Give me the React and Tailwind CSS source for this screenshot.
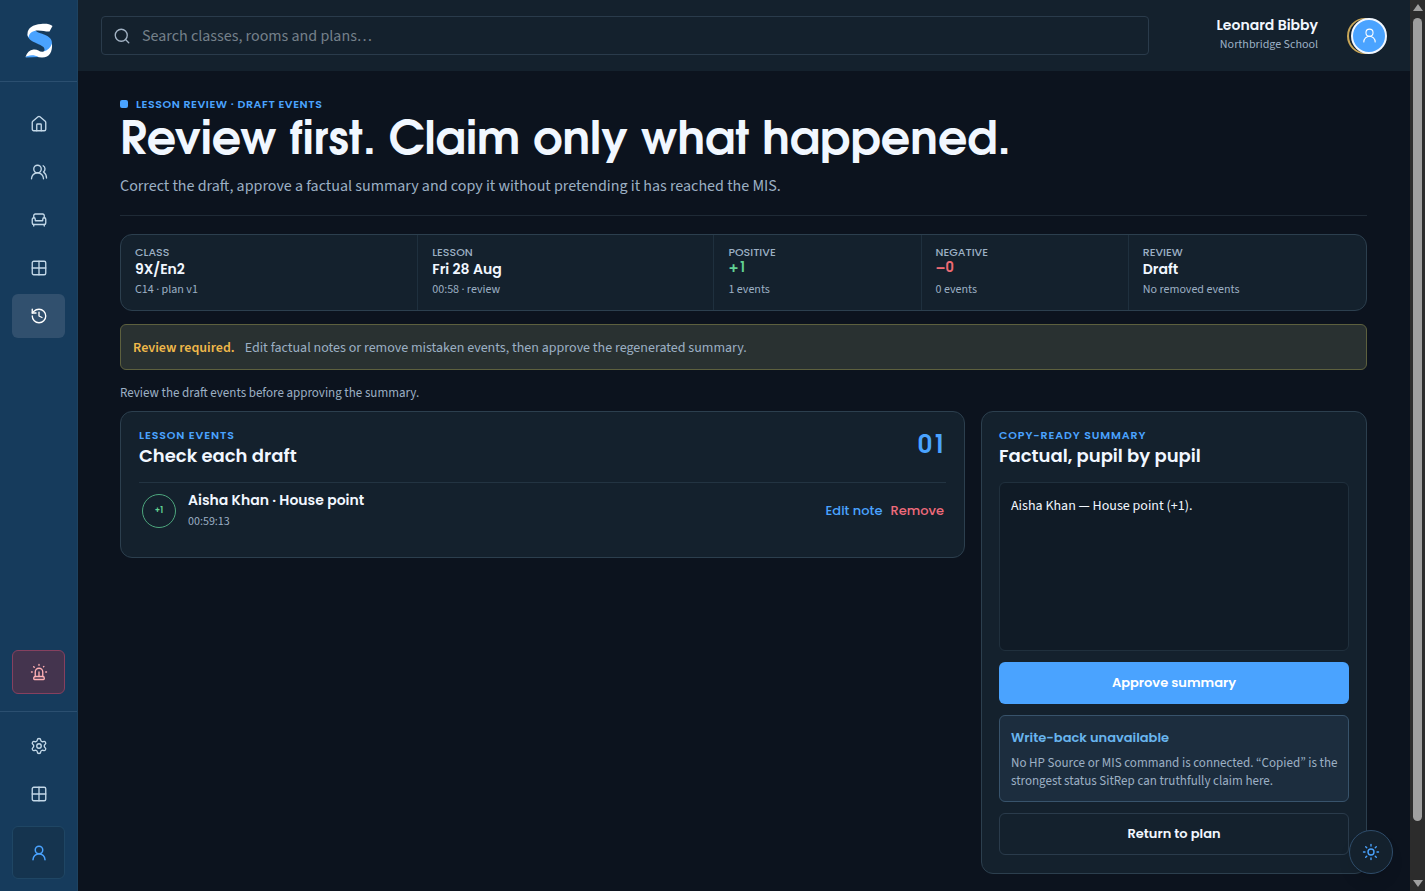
import {
  Grid2x2,
  History,
  House,
  Search,
  Settings,
  Siren,
  Sun,
  UserRound,
  UsersRound,
} from 'lucide-react'

const display = "font-['Poppins','Inter',sans-serif]"
const headline = "font-['ITC_Avant_Garde_Gothic','URW_Gothic','TeX_Gyre_Adventor','Poppins','Inter',sans-serif]"

const stats = [
  { label: 'Class', value: '9X/En2', note: 'C14 · plan v1' },
  { label: 'Lesson', value: 'Fri 28 Aug', note: '00:58 · review' },
  { label: 'Positive', value: '+1', note: '1 events', tone: 'text-[#62d394]' },
  { label: 'Negative', value: '−0', note: '0 events', tone: 'text-[#ef6b73]' },
  { label: 'Review', value: 'Draft', note: 'No removed events' },
]

const nav = [
  { label: 'Home', icon: House },
  { label: 'Classes', icon: UsersRound },
  { label: 'Rooms', icon: SofaIcon },
  { label: 'Plans', icon: Grid2x2 },
  { label: 'History', icon: History, active: true },
]

function SofaIcon({ size, strokeWidth }) {
  return (
    <svg
      width={size}
      height={size}
      viewBox="0 0 24 24"
      fill="none"
      stroke="currentColor"
      strokeWidth={strokeWidth}
      strokeLinecap="round"
      strokeLinejoin="round"
      aria-hidden="true"
    >
      <path d="M19 9V6a2 2 0 0 0-2-2H7a2 2 0 0 0-2 2v3" />
      <path d="M3 16a2 2 0 0 0 2 2h14a2 2 0 0 0 2-2v-5a2 2 0 0 0-4 0v1.500a.5.5 0 0 1-.5.5h-9a.5.5 0 0 1-.5-.5V11a2 2 0 0 0-4 0z" />
      <path d="M5 18v2M19 18v2" />
    </svg>
  )
}

function Logo() {
  return (
    <svg viewBox="0 0 28 36" className="h-9 w-7" aria-hidden="true">
      <path d="M2.500 11c0 5 4 7 9.500 9.500 4 2 7.500 3 7.500 6 0 1.500-1 3-2 4C23 30 27 26 27 20.500c0-5-3-7-8-9-5-2-8.500-2.500-9.500-5.500z" fill="#4aa3ff" />
      <path d="M27.500 3C25 1 21 .6 16 1 8 1.500 2.500 5 2.500 11c0 1.500.3 2.500 1 3.500C4 10 8 7.500 13 7.500c5 0 9 1.500 11.500 1z" fill="#fff" />
      <path d="M27 20.500c.5 8-2 14-10 14-6 0-8-3-16.500-.5 1.500-4.500 4-7 8-7.500 4.500-.5 6 3 10 2 4-1 7-3.500 8.500-8z" fill="#fff" />
      <path d="M.5 34.500c1-2 8-3.500 13-.5z" fill="#4aa3ff" />
    </svg>
  )
}

function NavButton({ label, icon: Icon, active }) {
  return (
    <button
      type="button"
      aria-label={label}
      className={`flex h-11 w-full items-center justify-center rounded-md ${
        active ? 'bg-[#31506e] text-white' : 'text-[#c3d8e8]'
      }`}
    >
      <Icon size={18} strokeWidth={1.8} />
    </button>
  )
}

function Sidebar() {
  return (
    <aside className="flex w-[78px] shrink-0 flex-col border-r border-[#1d4260] bg-[#163b5c]">
      <a href="#home" aria-label="SitRep" className="flex h-[82px] items-center justify-center border-b border-[#2b4f70]">
        <Logo />
      </a>
      <nav className="flex grow flex-col gap-1 px-3 pt-5">
        {nav.map((item) => (
          <NavButton key={item.label} {...item} />
        ))}
      </nav>
      <div className="px-3 pb-[17px]">
        <button
          type="button"
          aria-label="Alert"
          className="flex h-11 w-full items-center justify-center rounded-md border border-[#86405f] bg-[#44344e] text-[#ffb0b4]"
        >
          <Siren size={18} strokeWidth={1.8} />
        </button>
      </div>
      <div className="flex flex-col gap-1 border-t border-[#2b4f70] px-3 pt-3 pb-3">
        <NavButton label="Settings" icon={Settings} />
        <NavButton label="Layouts" icon={Grid2x2} />
        <button
          type="button"
          aria-label="Account"
          className="mt-1.5 flex h-[53px] w-full items-center justify-center rounded-md border border-[#1f4664] bg-[#15344f] text-[#4aa3ff]"
        >
          <UserRound size={18} strokeWidth={2} />
        </button>
      </div>
    </aside>
  )
}

function Header() {
  return (
    <header className="flex h-[71px] shrink-0 items-center bg-[#14212d] px-[23px]">
      <label className="flex h-[39px] grow items-center gap-[11px] rounded border border-[#2a3b4b] px-[11px]">
        <Search size={18} strokeWidth={1.8} className="shrink-0 text-[#a3b3c4]" />
        <input
          type="search"
          aria-label="Search"
          placeholder="Search classes, rooms and plans…"
          className="w-full bg-transparent text-[16px] text-white outline-none placeholder:text-[#75808a]"
        />
      </label>
      <div className="mb-[3px] w-[169px] shrink-0 text-right">
        <p className={`${display} text-[14px] leading-5 font-semibold text-[#f1f7ff]`}>Leonard Bibby</p>
        <p className="mt-[2px] text-[12px] leading-4 text-[#9cb0c4]">Northbridge School</p>
      </div>
      <button
        type="button"
        aria-label="Profile"
        className="ml-[33px] flex size-9 shrink-0 items-center justify-center rounded-full border-2 border-[#f1f7ff] bg-[#4aa3ff] text-white shadow-[-3px_0_0_-1px_#14212d,-4px_0_0_0_#c9a758]"
      >
        <UserRound size={17} strokeWidth={1.5} />
      </button>
    </header>
  )
}

function Stats() {
  return (
    <dl className="grid grid-cols-[1.430fr_1.430fr_1fr_1fr_1.150fr] rounded-xl border border-[#2c3f4e] bg-[#14212d]">
      {stats.map((s) => (
        <div key={s.label} className="h-[75px] border-l border-[#1f303e] px-[14px] pt-[9px] first:border-l-0">
          <dt className={`${display} text-[11px] leading-4 font-medium text-[#9cb0c4] uppercase`}>{s.label}</dt>
          {s.tone ? (
            <dd className={`${headline} text-[14px] leading-[18px] font-semibold ${s.tone}`}>{s.value}</dd>
          ) : (
            <dd className={`${display} text-[14px] leading-[18px] font-semibold text-[#f1f7ff]`}>{s.value}</dd>
          )}
          <dd className="mt-1 text-[12px] leading-4 text-[#9cb0c4]">{s.note}</dd>
        </div>
      ))}
    </dl>
  )
}

function CardHeading({ eyebrow, title }) {
  return (
    <div>
      <p className={`${display} text-[11px] leading-4 font-semibold tracking-[0.08em] text-[#4aa3ff] uppercase`}>{eyebrow}</p>
      <h2 className={`${display} text-[18px] leading-[26px] font-semibold text-[#f1f7ff]`}>{title}</h2>
    </div>
  )
}

function Events() {
  return (
    <section className="h-[147px] rounded-xl border border-[#2c3f4e] bg-[#14212d] px-[18px] pt-[15px]">
      <div className="flex h-14 justify-between border-b border-[#233442]">
        <CardHeading eyebrow="Lesson events" title="Check each draft" />
        <span className={`${headline} pt-1 text-[25px] leading-8 font-semibold text-[#4aa3ff]`}>01</span>
      </div>
      <div className="flex items-center pt-[7px] pr-[2px] pl-[3px]">
        <span className={`${display} flex size-[34px] items-center justify-center rounded-full border border-[#4da67d] text-[8px] font-semibold text-[#62d394]`}>
          +1
        </span>
        <div className="mb-[2px] ml-3 grow">
          <h3 className={`${display} text-[14px] leading-5 font-semibold text-[#f1f7ff]`}>Aisha Khan · House point</h3>
          <p className="mt-1 text-[12px] leading-4 text-[#9cb0c4]">00:59:13</p>
        </div>
        <div className={`${display} flex gap-2 text-[13px] leading-5 font-medium`}>
          <button type="button" className="text-[#4aa3ff]">Edit note</button>
          <button type="button" className="text-[#ef6b7b]">Remove</button>
        </div>
      </div>
    </section>
  )
}

function Summary() {
  return (
    <section className="rounded-xl border border-[#2c3f4e] bg-[#14212d] px-[17px] pt-[15px] pb-[18px]">
      <CardHeading eyebrow="Copy-ready summary" title="Factual, pupil by pupil" />
      <textarea
        aria-label="Summary"
        readOnly
        defaultValue="Aisha Khan — House point (+1)."
        className="mt-[13px] block h-[169px] w-full resize-none rounded-md border border-[#20303d] bg-[#101b26] px-[11px] py-[13px] text-[14px] leading-5 text-[#f1f7ff] outline-none"
      />
      <button type="button" className={`${display} mt-[11px] h-[42px] w-full rounded-md bg-[#4aa3ff] text-[13px] font-semibold text-white`}>
        Approve summary
      </button>
      <div className="mt-[11px] rounded-md border border-[#38536b] bg-[#1c2d3e] pt-3 pr-2 pb-[11px] pl-[11px]">
        <h3 className={`${display} text-[13px] leading-5 font-semibold text-[#69b5ee]`}>Write-back unavailable</h3>
        <p className="mt-[6px] text-[13px] leading-[18px] text-[#9cb0c4]">
          No HP Source or MIS command is connected. “Copied” is the strongest status SitRep can truthfully claim here.
        </p>
      </div>
      <button type="button" className={`${display} mt-[11px] h-[42px] w-full rounded-md border border-[#2a3b4b] text-[13px] font-semibold text-[#f1f7ff]`}>
        Return to plan
      </button>
    </section>
  )
}

function ScrollTrack() {
  return (
    <div aria-hidden="true" className="flex w-[15px] shrink-0 flex-col items-center bg-[#2c2c2c] py-1">
      <span className="border-x-[5px] border-b-[7px] border-x-transparent border-b-[#9f9f9f]" />
      <span className="mt-[7px] h-[803px] w-[9px] rounded-full bg-[#9f9f9f]" />
      <span className="mt-auto border-x-[5px] border-t-[7px] border-x-transparent border-t-[#9f9f9f]" />
    </div>
  )
}

export default function App() {
  return (
    <div className="flex h-screen overflow-hidden bg-[#0c131e] font-['Source_Sans_3','Source_Sans_Pro','Noto_Sans_CJK_KR',sans-serif]">
      <Sidebar />
      <div className="flex min-w-0 grow flex-col">
        <Header />
        <main className="pt-[25px] pr-[43px] pl-[42px]">
          <p className={`${display} flex items-center gap-2 text-[11px] leading-4 font-semibold tracking-wider text-[#4aa3ff] uppercase`}>
            <span className="size-2 rounded-xs bg-[#4aa3ff]" />
            Lesson review · Draft events
          </p>
          <h1 className={`${headline} pt-[5px] text-[46px] leading-[50px] font-bold text-[#f1f7ff]`}>
            Review first. Claim only what happened.
          </h1>
          <p className="mt-[7px] border-b border-[#1f2a36] pb-[17px] text-[16px] leading-6 text-[#9cb0c4]">
            Correct the draft, approve a factual summary and copy it without pretending it has reached the MIS.
          </p>
          <div className="mt-[18px]">
            <Stats />
          </div>
          <p className="mt-[13px] flex h-[46px] items-center gap-[10px] rounded-md border border-[#5d603e] bg-[#293131] px-3 pt-[2px] text-[14px] text-[#9cb0c4]">
            <strong className="font-semibold text-[#f0b94a]">Review required.</strong>
            Edit factual notes or remove mistaken events, then approve the regenerated summary.
          </p>
          <p className="mt-[13px] text-[13px] leading-5 text-[#9cb0c4]">Review the draft events before approving the summary.</p>
          <div className="mt-2 grid grid-cols-[minmax(0,1fr)_386px] items-start gap-4">
            <Events />
            <Summary />
          </div>
        </main>
      </div>
      <ScrollTrack />
      <button
        type="button"
        aria-label="Toggle theme"
        className="fixed right-8 bottom-[17px] flex size-11 items-center justify-center rounded-full border border-[#2f4d6b] bg-[#14212d] text-[#4aa3ff] shadow-lg"
      >
        <Sun size={18} strokeWidth={1.8} />
      </button>
    </div>
  )
}
